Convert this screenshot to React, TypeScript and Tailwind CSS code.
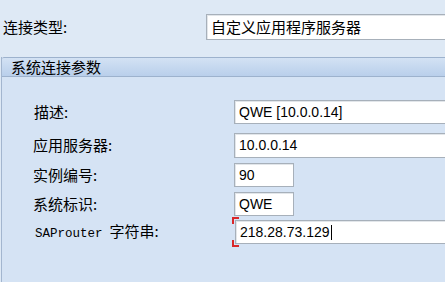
import React from "react";

const cjk = { fontFamily: '"Noto Sans CJK SC", "Noto Sans", sans-serif' };
const latin = { fontFamily: '"Liberation Sans", "Noto Sans CJK SC", sans-serif' };
const mono = { fontFamily: '"Liberation Mono", monospace' };

function Field({ children }: { children?: React.ReactNode }) {
  return (
    <div
      className="flex-1 h-full bg-white border border-[#a7b0ba] border-r-0 shadow-[inset_1px_1px_0_#e2e6ea] flex items-center pl-[4px] text-[14px] text-black"
      style={latin}
    >
      {children}
    </div>
  );
}

export default function App() {
  return (
    <div className="w-[445px] h-[282px] overflow-hidden bg-[#dee9f5] flex flex-col">
      {/* connection type row */}
      <div className="flex items-center h-[26px] mt-[14px]">
        <div className="w-[206px] pl-[3px] text-[15px] text-black" style={cjk}>
          连接类型:
        </div>
        <div
          className="flex-1 h-full bg-white border border-[#a7b0ba] border-r-0 shadow-[inset_1px_1px_0_#e2e6ea] flex items-center pl-[4px] text-[15px] text-black"
          style={cjk}
        >
          自定义应用程序服务器
        </div>
      </div>

      {/* group box */}
      <div className="mt-[17px] ml-[1px] flex-1 flex flex-col border-l border-[#a3b6cf]">
        <div
          className="h-[20px] flex items-center pl-[9px] text-[15px] text-black border-t border-b border-[#9db2cd] bg-gradient-to-b from-[#d3e2f4] to-[#b9cfeb] rounded-tl-[2px]"
          style={cjk}
        >
          系统连接参数
        </div>
        <div className="flex-1 bg-[#d5e3f4] flex flex-col pt-[23px]">
          <div className="flex items-center h-[24px]">
            <div className="w-[232px] pl-[32px] text-[15px] text-black" style={cjk}>描述:</div>
            <Field>QWE [10.0.0.14]</Field>
          </div>
          <div className="flex items-center h-[25px] mt-[9px]">
            <div className="w-[232px] pl-[31px] text-[15px] text-black" style={cjk}>应用服务器:</div>
            <Field>10.0.0.14</Field>
          </div>
          <div className="flex items-center h-[24px] mt-[5px]">
            <div className="w-[232px] pl-[31px] text-[15px] text-black" style={cjk}>实例编号:</div>
            <div className="w-[60px] h-full bg-white border border-[#a7b0ba] shadow-[inset_1px_1px_0_#e2e6ea] flex items-center pl-[4px] text-[14px] text-black" style={latin}>
              90
            </div>
          </div>
          <div className="flex items-center h-[24px] mt-[5px]">
            <div className="w-[232px] pl-[31px] text-[15px] text-black" style={cjk}>系统标识:</div>
            <div className="w-[60px] h-full bg-white border border-[#a7b0ba] shadow-[inset_1px_1px_0_#e2e6ea] flex items-center pl-[4px] text-[14px] text-black" style={latin}>
              QWE
            </div>
          </div>
          <div className="flex items-center h-[24px] mt-[4px]">
            <div className="w-[233px] pl-[33px] text-[15px] text-black flex items-baseline" style={cjk}>
              <span className="text-[12.5px]" style={mono}>SAProuter</span>
              <span className="ml-[7px]">字符串:</span>
            </div>
            <div className="relative flex-1 h-full">
              <span className="absolute left-[-3px] top-[-3px] w-[7px] h-[7px] border-l-2 border-t-2 border-[#d9282a]" />
              <span className="absolute left-[-3px] bottom-[-3px] w-[7px] h-[7px] border-l-2 border-b-2 border-[#d9282a]" />
              <div className="w-full h-full bg-white border border-[#a7b0ba] border-r-0 shadow-[inset_1px_1px_0_#e2e6ea] flex items-center pl-[4px] text-[14px] text-black" style={latin}>
                218.28.73.129
                <span className="inline-block w-[1px] h-[15px] bg-black ml-[1px]" />
              </div>
            </div>
          </div>
        </div>
      </div>
    </div>
  );
}
